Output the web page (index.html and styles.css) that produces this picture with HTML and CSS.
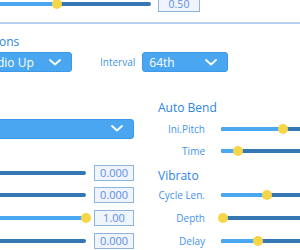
FILE: index.html
```html
<!DOCTYPE html>
<html>
<head>
<meta charset="utf-8">
<link rel="stylesheet" href="styles.css">
</head>
<body>
<div class="panel">
  <div class="top-row">
    <div class="slider top-slider">
      <div class="fill" style="width:50.8%"></div>
      <div class="thumb" style="left:50.8%"></div>
    </div>
    <div class="value top-value">0.50</div>
  </div>
  <div class="divider"></div>

  <div class="title options-title">Options</div>
  <div class="options-row">
    <div class="dropdown mode-drop"><span>Audio Up</span><svg class="chev" viewBox="0 0 12 7"><polyline points="1,1 6,5.5 11,1"/></svg></div>
    <div class="label interval-label">Interval</div>
    <div class="dropdown interval-drop"><span>64th</span><svg class="chev" viewBox="0 0 12 7"><polyline points="1,1 6,5.5 11,1"/></svg></div>
  </div>

  <div class="grid">
    <div class="cell"></div>
    <div class="cell title">Auto Bend</div>

    <div class="cell"><div class="dropdown wide-drop"><span>Off</span><svg class="chev" viewBox="0 0 12 7"><polyline points="1,1 6,5.5 11,1"/></svg></div></div>
    <div class="cell row-r"><div class="label">Ini.Pitch</div><div class="slider r-slider"><div class="fill" style="width:56.4%"></div><div class="thumb" style="left:56.4%"></div></div></div>

    <div class="cell"></div>
    <div class="cell row-r"><div class="label">Time</div><div class="slider r-slider"><div class="fill" style="width:15.5%"></div><div class="thumb" style="left:15.5%"></div></div></div>

    <div class="cell row-l"><div class="slider l-slider"><div class="fill" style="width:0%"></div></div><div class="value">0.000</div></div>
    <div class="cell title vib-title">Vibrato</div>

    <div class="cell row-l"><div class="slider l-slider"><div class="fill" style="width:0%"></div></div><div class="value">0.000</div></div>
    <div class="cell row-r"><div class="label">Cycle Len.</div><div class="slider r-slider"><div class="fill" style="width:41.8%"></div><div class="thumb" style="left:41.8%"></div></div></div>

    <div class="cell row-l"><div class="slider l-slider"><div class="fill" style="width:100%"></div><div class="thumb" style="left:100%"></div></div><div class="value">1.00</div></div>
    <div class="cell row-r"><div class="label">Depth</div><div class="slider r-slider"><div class="fill" style="width:1.8%"></div><div class="thumb" style="left:1.8%"></div></div></div>

    <div class="cell row-l"><div class="slider l-slider"><div class="fill" style="width:0%"></div></div><div class="value">0.000</div></div>
    <div class="cell row-r"><div class="label">Delay</div><div class="slider r-slider"><div class="fill" style="width:33.6%"></div><div class="thumb" style="left:33.6%"></div></div></div>
  </div>
</div>
</body>
</html>
```

FILE: styles.css
```css
html, body {
  margin: 0;
  padding: 0;
  background: #ffffff;
  width: 300px;
  height: 250px;
  overflow: hidden;
}
body {
  font-family: "Open Sans", "Liberation Sans", sans-serif;
}
.panel {
  margin: -4px 0 0 -60px;
  width: 460px;
}
.top-row {
  display: flex;
  align-items: center;
  height: 16px;
  padding-left: 20px;
}
.slider {
  position: relative;
  height: 4px;
  border-radius: 2px;
  background: #3577b3;
}
.fill {
  height: 100%;
  border-radius: 2px;
  background: #4aa7f1;
}
.thumb {
  position: absolute;
  top: 50%;
  width: 10px;
  height: 10px;
  border-radius: 50%;
  background: #f6d647;
  transform: translate(-50%, -50%);
}
.top-slider {
  width: 191px;
}
.value {
  box-sizing: border-box;
  width: 40px;
  height: 16px;
  border: 1px solid #8db4dc;
  background: #f0f4fc;
  color: #5a8fe6;
  font-size: 11px;
  line-height: 14px;
  text-align: center;
}
.top-value {
  width: 42px;
  margin-left: 7px;
  font-size: 10.5px;
}
.divider {
  margin-top: 10px;
  height: 2px;
  background: #b4d2ef;
}
.title {
  color: #2d84e0;
  font-size: 12px;
  font-weight: 500;
  line-height: 16px;
}
.options-title {
  margin: 10px 0 0 35px;
}
.options-row {
  display: flex;
  align-items: center;
  margin: 2px 0 0 35px;
  height: 20px;
}
.dropdown {
  box-sizing: border-box;
  display: flex;
  align-items: center;
  justify-content: space-between;
  height: 20px;
  padding: 0 10px 0 6px;
  background: #4aa6f0;
  border: 1px solid #3d98e8;
  border-radius: 3px;
  color: #ffffff;
  font-size: 12px;
}
.chev {
  width: 12px;
  height: 7px;
  fill: none;
  stroke: #ffffff;
  stroke-width: 1.8;
  stroke-linecap: round;
  stroke-linejoin: round;
}
.mode-drop {
  width: 97px;
}
.label {
  color: #3f94ee;
  font-size: 10px;
}
.interval-label {
  margin: 0 7px 0 28px;
}
.interval-drop {
  width: 86px;
}
.grid {
  display: grid;
  grid-template-columns: 194px 240px;
  grid-template-rows: 20px 21px 23px 22px 22px 23px 23px;
  column-gap: 24px;
  margin: 26px 0 0 0;
}
.cell {
  display: flex;
  align-items: center;
}
.wide-drop {
  width: 100%;
  height: 20px;
}
.vib-title {
  align-items: flex-end;
}
.row-l {
  gap: 8px;
}
.l-slider {
  flex: 1;
}
.row-r .label {
  width: 47px;
  text-align: right;
  margin-right: 16px;
}
.r-slider {
  width: 110px;
}
```
